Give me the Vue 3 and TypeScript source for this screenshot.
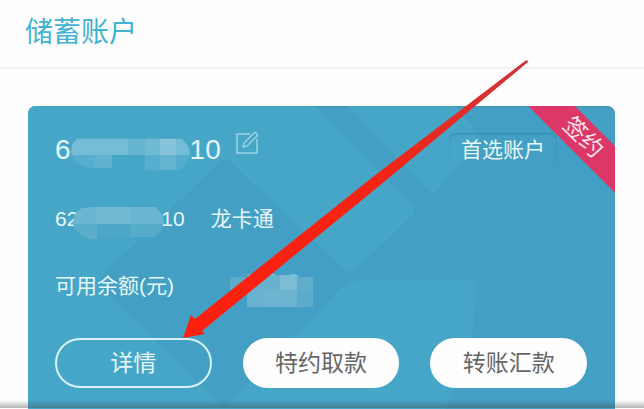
<script setup lang="ts">
interface Block {
  x: number
  y: number
  w: number
  h: number
  o: number
}

const numberBlocks: Block[] = [
  { x: 0, y: 0, w: 58, h: 17, o: 0.26 },
  { x: 58, y: 0, w: 18, h: 17, o: 0.17 },
  { x: 76, y: 0, w: 15, h: 17, o: 0.23 },
  { x: 91, y: 0, w: 17, h: 17, o: 0.34 },
  { x: 108, y: 0, w: 14, h: 17, o: 0.26 },
  { x: 0, y: 17, w: 25, h: 16, o: 0.1 },
  { x: 25, y: 17, w: 17, h: 13, o: 0.14 },
  { x: 76, y: 17, w: 15, h: 16, o: 0.1 },
  { x: 91, y: 17, w: 17, h: 16, o: 0.16 },
  { x: 108, y: 17, w: 14, h: 16, o: 0.08 },
]

const cardBlocks: Block[] = [
  { x: 0, y: 0, w: 24, h: 17, o: 0.2 },
  { x: 24, y: 0, w: 33, h: 17, o: 0.24 },
  { x: 57, y: 0, w: 34, h: 17, o: 0.2 },
  { x: 0, y: 17, w: 24, h: 16, o: 0.11 },
  { x: 24, y: 17, w: 33, h: 14, o: 0.03 },
  { x: 57, y: 17, w: 34, h: 13, o: 0.09 },
]

const balanceBlocks: Block[] = [
  { x: 17, y: 1, w: 33, h: 15, o: 0.19 },
  { x: 50, y: 1, w: 17, h: 15, o: 0.31 },
  { x: 67, y: 3, w: 16, h: 13, o: 0.16 },
  { x: 0, y: 3, w: 17, h: 13, o: 0.13 },
  { x: 17, y: 16, w: 16, h: 17, o: 0.2 },
  { x: 33, y: 16, w: 34, h: 17, o: 0.22 },
  { x: 67, y: 16, w: 16, h: 17, o: 0.13 },
]

const actions: { label: string; outlined: boolean }[] = [
  { label: '详情', outlined: true },
  { label: '特约取款', outlined: false },
  { label: '转账汇款', outlined: false },
]
</script>

<template>
  <div class="page">
    <header class="header">
      <h1 class="title">储蓄账户</h1>
    </header>

    <main class="content">
      <section class="card">
        <svg class="pattern" viewBox="28 106 587 302" preserveAspectRatio="none" aria-hidden="true">
          <g fill="#46a6c8">
            <path d="M28 106H315L412 205Q417 210 412 215L357 268Q350 275 343 268L232 163Q225 156 218 163L103 274Q97 281 103 288L224 408H28Z" />
            <path d="M348 106H456L479 134Q482 138 478 143L437 190Q433 195 428 190Z" />
            <path d="M224 408L342 287Q350 280 360 280H470Q476 280 476 287Q476 350 445 408Z" />
          </g>
        </svg>

        <div class="row row-top">
          <div class="number">
            <span>6</span>
            <svg class="mosaic" width="119" height="33" viewBox="0 0 122 33" aria-hidden="true">
              <clipPath id="number-clip">
                <path d="M7 0H113Q122 7 122 16Q121 28 108 33H76V30H18Q3 27 0 15Q0 4 7 0Z" />
              </clipPath>
              <g clip-path="url(#number-clip)" fill="#fff" shape-rendering="crispEdges">
                <rect v-for="(b, i) in numberBlocks" :key="i" :x="b.x" :y="b.y" :width="b.w" :height="b.h" :fill-opacity="b.o" />
              </g>
            </svg>
            <span>10</span>
          </div>
          <button class="edit" type="button" aria-label="编辑">
            <svg width="24" height="24" viewBox="0 0 24 24" fill="none" stroke="#9ad2e3" stroke-width="1.5">
              <path d="M15 3H2V22H22V8" />
              <path d="M8 16L9 12L19 2Q20 1 21.5 2.5Q23 4 22 5L12 15Z" stroke-linejoin="round" />
            </svg>
          </button>
          <span class="preferred">首选账户</span>
        </div>

        <div class="row">
          <span>62</span>
          <svg class="mosaic mosaic-over" width="91" height="33" viewBox="0 0 91 33" aria-hidden="true">
            <clipPath id="card-clip">
              <path d="M9 1L20 0H82Q91 6 91 16Q89 29 76 31L24 33Q5 32 0 17Q0 5 9 1Z" />
            </clipPath>
            <g clip-path="url(#card-clip)" shape-rendering="crispEdges">
              <rect width="91" height="33" fill="#46a4c6" />
              <g fill="#fff">
                <rect v-for="(b, i) in cardBlocks" :key="i" :x="b.x" :y="b.y" :width="b.w" :height="b.h" :fill-opacity="b.o" />
              </g>
            </g>
          </svg>
          <span>10</span>
          <span class="kind">龙卡通</span>
        </div>

        <div class="row">
          <span>可用余额(元)</span>
          <svg class="mosaic balance" width="83" height="33" viewBox="0 0 83 33" aria-hidden="true">
            <g fill="#fff" shape-rendering="crispEdges">
              <rect v-for="(b, i) in balanceBlocks" :key="i" :x="b.x" :y="b.y" :width="b.w" :height="b.h" :fill-opacity="b.o" />
            </g>
            <path d="M18 1q3-1 6 0M38 1q4-1 7 0M61 1q4-1 7 1" fill="none" stroke="#8ccbdf" />
          </svg>
        </div>

        <div class="actions">
          <button v-for="a in actions" :key="a.label" type="button" class="action" :class="{ outlined: a.outlined }">
            {{ a.label }}
          </button>
        </div>

        <span class="ribbon">签约</span>
      </section>
    </main>

    <div class="edge"></div>

    <svg class="arrow" width="347" height="280" viewBox="182 60 347 280" aria-hidden="true">
      <defs>
        <linearGradient id="arrow-fill" x1="0" y1="1" x2="1" y2="0">
          <stop offset="0" stop-color="#ff1f10" />
          <stop offset="0.55" stop-color="#f52414" />
          <stop offset="1" stop-color="#cf353a" />
        </linearGradient>
      </defs>
      <path d="M183 338L191 315L195 319L374 176L525 61Q528 59 528 62L384 182L202 331L205 334Z" fill="url(#arrow-fill)" />
    </svg>
  </div>
</template>

<style>
body {
  margin: 0;
  background: #fefefe;
}
</style>

<style scoped>
.page {
  position: relative;
  min-height: 100vh;
  overflow: hidden;
  font-family: "Liberation Sans", "Noto Sans CJK SC", sans-serif;
}

.header {
  display: flex;
  align-items: center;
  height: 67px;
  padding: 0 25px;
  border-bottom: 2px solid #f0f0f1;
}

.title {
  margin: 0;
  padding-bottom: 2px;
  color: #42b3d5;
  font-size: 28px;
  font-weight: 400;
  line-height: 40px;
}

.content {
  padding: 37px 29px 0 28px;
}

.card {
  position: relative;
  display: flex;
  flex-direction: column;
  gap: 37px;
  padding: 27px 28px 21px 27px;
  overflow: hidden;
  border-radius: 8px 8px 0 0;
  background: #439fc3;
  box-shadow: inset 0 1px 1px #4b8fa9;
  color: #e6f7fb;
  font-size: 21px;
}

.pattern {
  position: absolute;
  inset: 0;
  width: 100%;
  height: 100%;
}

.row {
  position: relative;
  display: flex;
  align-items: center;
  height: 30px;
  line-height: 30px;
}

.row-top {
  height: 34px;
}

.number {
  display: flex;
  align-items: center;
  font-size: 28px;
}

.mosaic {
  flex: none;
  margin-top: 8px;
}

.mosaic-over {
  margin-right: -3px;
  margin-left: -5px;
}

.balance {
  margin-left: 56px;
}

.edit {
  display: flex;
  margin: 0 0 14px 14px;
  padding: 0;
  border: 0;
  background: none;
}

.preferred {
  margin: 0 30px 0 auto;
  padding: 2px 12px;
  border-radius: 7px;
  box-shadow: inset 0 1px 2px #2f87aa;
}

.kind {
  margin-left: 26px;
}

.actions {
  position: relative;
  display: grid;
  grid-template-columns: repeat(3, 1fr);
  gap: 31px;
}

.action {
  height: 50px;
  padding: 0;
  border: 2px solid #fefefe;
  border-radius: 25px;
  background: #fefefe;
  color: #666;
  font-family: inherit;
  font-size: 23px;
  line-height: 32px;
}

.action.outlined {
  border-color: #d9f2f7;
  background: none;
  color: #e6f7fb;
}

.ribbon {
  position: absolute;
  top: 15px;
  right: -38px;
  width: 140px;
  background: #dc3767;
  color: #fbe3ec;
  font-size: 23px;
  line-height: 33px;
  text-align: center;
  transform: rotate(45deg);
}

.edge {
  position: absolute;
  right: 0;
  bottom: 1px;
  left: 0;
  height: 8px;
  background: linear-gradient(rgba(70, 70, 70, 0), rgba(70, 70, 70, 0.4));
}

.arrow {
  position: absolute;
  top: 60px;
  left: 182px;
}
</style>
